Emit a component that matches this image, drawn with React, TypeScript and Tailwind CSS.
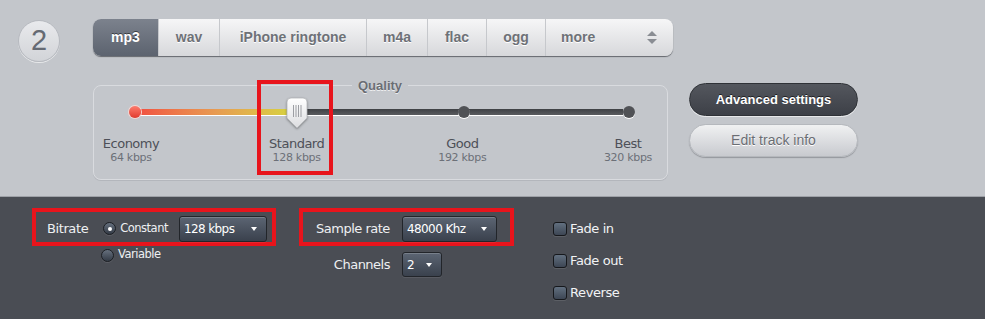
import React from "react";

const tabs = [
  { label: "mp3", w: "w-[65px]" },
  { label: "wav", w: "w-[61px]" },
  { label: "iPhone ringtone", w: "w-[147px]" },
  { label: "m4a", w: "w-[61px]" },
  { label: "flac", w: "w-[59px]" },
  { label: "ogg", w: "w-[59px]" },
];

const levels = [
  { name: "Economy", rate: "64 kbps" },
  { name: "Standard", rate: "128 kbps" },
  { name: "Good", rate: "192 kbps" },
  { name: "Best", rate: "320 kbps" },
];

const Select = ({ value, w, h = "h-[26px]" }: { value: string; w: string; h?: string }) => (
  <div
    className={`${w} ${h} flex items-center justify-between rounded-[3px] border border-[#22252a] bg-gradient-to-b from-[#5c6573] to-[#3a414d] pl-[4px] pr-[9px] text-[12px] tracking-[-0.6px] text-white shadow-[inset_0_1px_0_rgba(255,255,255,0.18),0_1px_0_rgba(255,255,255,0.08)]`}
  >
    <span>{value}</span>
    <span className="h-0 w-0 border-x-[3.5px] border-t-[4px] border-x-transparent border-t-white" />
  </div>
);

const Radio = ({ checked }: { checked?: boolean }) => (
  <span className="flex h-[13px] w-[13px] items-center justify-center rounded-full border border-[#1c1f24] bg-gradient-to-b from-[#66707e] to-[#343b46] shadow-[0_1px_0_rgba(255,255,255,0.1)]">
    {checked && <span className="h-[4px] w-[4px] rounded-full bg-white" />}
  </span>
);

const Checkbox = ({ label }: { label: string }) => (
  <div className="flex h-[32px] items-center gap-[3px]">
    <span className="h-[14px] w-[14px] rounded-[3px] border border-[#16181c] bg-gradient-to-b from-[#627080] to-[#3d4654] shadow-[0_1px_0_rgba(255,255,255,0.1)]" />
    <span className="text-[13px] tracking-[-0.4px] text-[#f2f3f5]">{label}</span>
  </div>
);

const Thumb = () => (
  <svg width="22" height="33" viewBox="0 0 22 33" className="drop-shadow-[0_1px_1px_rgba(0,0,0,0.35)]">
    <defs>
      <linearGradient id="tg" x1="0" y1="0" x2="0" y2="1">
        <stop offset="0" stopColor="#ffffff" />
        <stop offset="1" stopColor="#dcdde0" />
      </linearGradient>
    </defs>
    <path d="M5 1 H17 Q21 1 21 5 V21 L11 31 L1 21 V5 Q1 1 5 1 Z" fill="url(#tg)" stroke="#b4b6ba" strokeWidth="0.8" />
    {[7.5, 10, 12.5, 15].map((x) => (
      <line key={x} x1={x} y1="8" x2={x} y2="20" stroke="#9c9ea3" strokeWidth="1" />
    ))}
  </svg>
);

export default function App() {
  return (
    <div className="h-[319px] w-[985px] overflow-hidden font-['DejaVu_Sans',sans-serif]">
      <div className="h-[197px] border-b border-[#9ea1a7] bg-[#c3c6cb] pt-[19px]">
        <div className="flex items-start">
          <div className="ml-[18px] mt-[1px] flex h-[42px] w-[42px] items-center justify-center rounded-full border border-[#b7bac0] bg-gradient-to-b from-[#e9eaed] to-[#d2d4d8] font-['Liberation_Sans',sans-serif] text-[29px] text-[#656a73] shadow-[0_1px_0_rgba(255,255,255,0.6)]">
            2
          </div>
          <div className="ml-[33px] flex h-[37px] overflow-hidden rounded-[8px] bg-gradient-to-b from-[#f6f6f7] to-[#d7d8db] font-['Liberation_Sans',sans-serif] text-[14px] font-bold shadow-[0_1px_1px_rgba(60,62,68,0.7)]">
            {tabs.map((t, i) => (
              <div
                key={t.label}
                className={`${t.w} flex items-center justify-center ${
                  i === 0
                    ? "bg-gradient-to-b from-[#7c828d] to-[#5c636f] text-white [text-shadow:0_-1px_0_rgba(0,0,0,0.5)]"
                    : "border-l border-[#c6c8cc] text-[#6e7177] [text-shadow:0_1px_0_#fff]"
                }`}
              >
                {t.label}
              </div>
            ))}
            <div className="flex w-[128px] items-center justify-between border-l border-[#c6c8cc] pl-[15px] pr-[16px] text-[#6e7177] [text-shadow:0_1px_0_#fff]">
              <span>more</span>
              <span className="flex flex-col items-center gap-[3px]">
                <span className="h-0 w-0 border-x-[5px] border-b-[5px] border-x-transparent border-b-[#8a8d93]" />
                <span className="h-0 w-0 border-x-[5px] border-t-[5px] border-x-transparent border-t-[#8a8d93]" />
              </span>
            </div>
          </div>
        </div>

        <div className="relative mt-[17px] flex items-start">
          <fieldset className="ml-[93px] h-[101px] w-[575px] rounded-[8px] border border-[#d9dbdf] shadow-[0_1px_0_rgba(150,153,160,0.35)]">
            <legend className="ml-[258px] px-[6px] font-['Liberation_Sans',sans-serif] text-[13px] leading-[13px] font-bold text-[#6a6d74] [text-shadow:0_1px_0_rgba(255,255,255,0.7)]">
              Quality
            </legend>
            <div className="relative ml-[35px] mt-[8px] h-[24px] w-[506px]">
              <div className="absolute left-[6px] top-[9px] h-[6px] w-[162px] bg-gradient-to-r from-[#f04c41] via-[#e79b52] to-[#d4d63c] shadow-[0_1px_0_#fff]" />
              <div className="absolute left-[168px] top-[9px] h-[6px] w-[326px] bg-gradient-to-b from-[#3f4145] to-[#5a5c60] shadow-[0_1px_0_#fff]" />
              <span className="absolute left-0 top-[6px] h-[12px] w-[12px] rounded-full bg-gradient-to-b from-[#ff7a6c] to-[#e03a2e] shadow-[0_0_0_1px_#f6d6d2]" />
              <span className="absolute left-[329px] top-[6px] h-[12px] w-[12px] rounded-full bg-[#505256] shadow-[0_1px_0_#fff]" />
              <span className="absolute left-[494px] top-[6px] h-[12px] w-[12px] rounded-full bg-[#505256] shadow-[0_1px_0_#fff]" />
              <div className="absolute left-[157px] top-[-3px]">
                <Thumb />
              </div>
            </div>
            <div className="ml-[2px] mt-[12px] flex w-[567px] justify-between">
              {levels.map((l) => (
                <div key={l.name} className="flex w-[70px] flex-col items-center whitespace-nowrap">
                  <span className="text-[13px] leading-[15px] tracking-[-0.5px] text-[#4d5058]">{l.name}</span>
                  <span className="text-[11px] leading-[14px] tracking-[-0.3px] text-[#6c7078]">{l.rate}</span>
                </div>
              ))}
            </div>
          </fieldset>
          <div className="absolute left-[257px] top-[1px] h-[95px] w-[76px] border-4 border-[#e8141c]" />

          <div className="ml-[21px] mt-[4px] flex flex-col gap-[8px] font-['Liberation_Sans',sans-serif]">
            <button className="h-[33px] w-[169px] rounded-full border border-[#2f3237] bg-gradient-to-b from-[#54575e] to-[#3d4047] text-[13px] font-bold text-white shadow-[0_1px_0_rgba(255,255,255,0.6)] [text-shadow:0_-1px_0_rgba(0,0,0,0.6)]">
              Advanced settings
            </button>
            <button className="h-[33px] w-[169px] rounded-full border border-[#b5b8bd] bg-gradient-to-b from-[#f0f1f2] to-[#c8cacf] text-[14px] text-[#6a6d73] shadow-[0_1px_1px_rgba(80,82,88,0.4)] [text-shadow:0_1px_0_#fff]">
              Edit track info
            </button>
          </div>
        </div>
      </div>

      <div className="flex h-[122px] items-start bg-[#4a4d54] pl-[32px] pt-[11px] text-[#eef0f2]">
        <div className="w-[244px]">
          <div className="flex h-[38px] items-center border-4 border-[#e8141c] pl-[11px] pt-[3px]">
            <span className="text-[13px] tracking-[-0.4px]">Bitrate</span>
            <span className="ml-[15px]">
              <Radio checked />
            </span>
            <span className="ml-[4px] text-[11.5px] tracking-[-0.5px]">Constant</span>
            <span className="ml-[11px]">
              <Select value="128 kbps" w="w-[88px]" />
            </span>
          </div>
          <div className="ml-[69px] mt-[2px] flex h-[14px] items-center gap-[4px]">
            <Radio />
            <span className="text-[11.5px] tracking-[-0.5px]">Variable</span>
          </div>
        </div>

        <div className="ml-[23px] w-[215px]">
          <div className="flex h-[38px] items-center border-4 border-[#e8141c] pl-[13px] pt-[3px]">
            <span className="w-[74px] whitespace-nowrap text-[13px] tracking-[-0.5px]">Sample rate</span>
            <span className="ml-[12px]">
              <Select value="48000 Khz" w="w-[95px]" />
            </span>
          </div>
          <div className="mt-[6px] flex items-center pl-[17px]">
            <span className="w-[74px] text-right text-[13px] tracking-[-0.5px]">Channels</span>
            <span className="ml-[12px]">
              <Select value="2" w="w-[40px]" h="h-[25px]" />
            </span>
          </div>
        </div>

        <div className="ml-[39px] mt-[5px] flex flex-col">
          <Checkbox label="Fade in" />
          <Checkbox label="Fade out" />
          <Checkbox label="Reverse" />
        </div>
      </div>
    </div>
  );
}
